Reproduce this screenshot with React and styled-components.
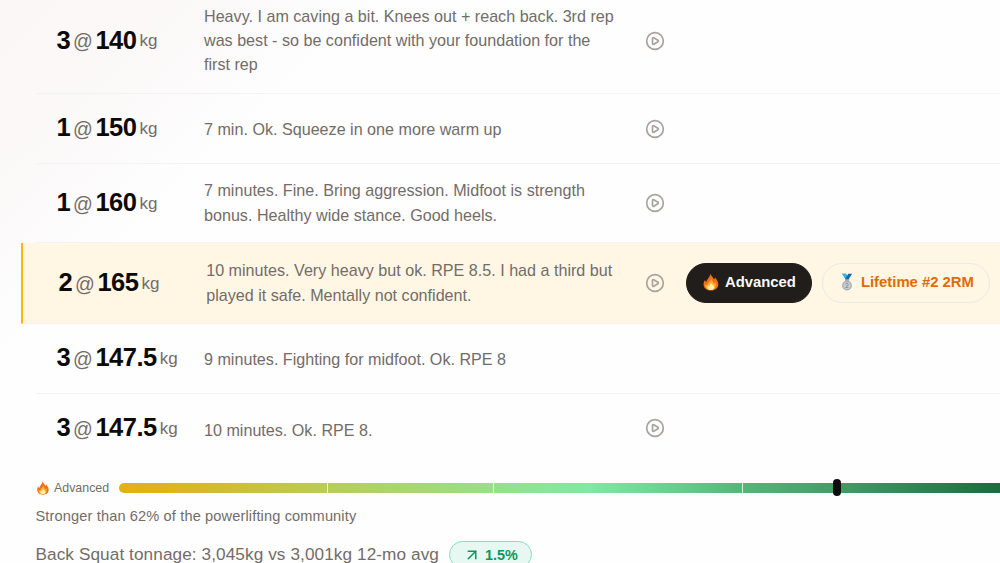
import React from 'react'
import styled, { createGlobalStyle } from 'styled-components'
import { CirclePlay, ArrowUpRight } from 'lucide-react'

const GlobalStyle = createGlobalStyle`
    * {
        box-sizing: border-box;
    }

    body {
        margin: 0;
        overflow: hidden;
        background: #fefefe;
        color: #736c68;
        font-family: "Liberation Sans", Arial, sans-serif;
    }
`;

export const Page = styled.main`
    width: 1000px;
    height: 563px;
    overflow: hidden;
    background: linear-gradient(137deg, #fbf7f7 0%, #fbf8f8 12%, #fefefe 24%, #fefefe 100%);
`;

export const SetList = styled.ul`
    list-style: none;
    margin: -12px 0 0;
    padding: 0 0 0 36px;
`;

export const SetRow = styled.li`
    display: grid;
    grid-template-columns: 147.6px 440.8px 41.2px 1fr;
    align-items: center;
    height: ${({ $height }) => $height}px;
    padding-left: 20.4px;
    border-bottom: 1px solid ${({ $last }) => ($last ? 'transparent' : '#f4f3f3')};
`;

export const BestRow = styled(SetRow)`
    grid-template-columns: 147.8px 438.6px 41.2px 1fr;
    margin-left: -15px;
    padding-left: 35.4px;
    border-left: 2px solid #fbb50b;
    border-bottom-color: #f6f2ea;
    background: #fff7e4;
`;

export const Lift = styled.div`
    display: flex;
    align-items: center;
    padding-bottom: ${({ $lift }) => $lift || 2}px;
    line-height: 30px;
    white-space: nowrap;
`;

export const Count = styled.span`
    color: #0c0a09;
    font-size: 25.5px;
    font-weight: bold;
    letter-spacing: -0.02em;
`;

export const At = styled.span`
    margin: 0 2.5px 0 3px;
    padding-top: 3px;
    font-size: 19.5px;
`;

export const Unit = styled.span`
    margin-left: 3px;
    padding-top: 3px;
    font-size: 17px;
`;

export const Note = styled.p`
    margin: 0;
    width: 414px;
    padding-top: ${({ $drop }) => $drop || 0}px;
    padding-bottom: ${({ $drop }) => ($drop ? 0 : 1)}px;
    font-size: 16.14px;
    line-height: 24.2px;
`;

export const PlayIcon = styled(CirclePlay)`
    display: block;
    color: #a8a29e;
`;

export const Badges = styled.div`
    display: flex;
    gap: 10px;
`;

export const Badge = styled.span`
    display: flex;
    align-items: center;
    gap: 5px;
    height: 40px;
    padding: 0 15px 2px;
    border: 1px solid ${({ $dark }) => ($dark ? '#211d1b' : '#ebe9e6')};
    border-radius: 20px;
    background: ${({ $dark }) => ($dark ? '#211d1b' : 'transparent')};
    color: ${({ $dark }) => ($dark ? '#fafaf9' : '#e26a06')};
    font-size: 14.85px;
    font-weight: bold;
    white-space: nowrap;
`;

export const Strength = styled.section`
    display: flex;
    align-items: center;
    height: 20px;
    margin: 15px 0 0 36px;
`;

export const Level = styled.span`
    display: flex;
    flex: none;
    align-items: center;
    gap: 4px;
    width: 83px;
    padding-bottom: 1px;
    font-size: 12.4px;
`;

export const Track = styled.div`
    position: relative;
    flex: none;
    width: 1040px;
    height: 10px;
    border-radius: 5px;
    background: linear-gradient(
        90deg,
        #e3b017 0%,
        #e0b21c 4%,
        #b8cd55 20%,
        #96e08a 36%,
        #80e8a1 45%,
        #6dd794 51%,
        #56b57a 60%,
        #449c67 69%,
        #1b6b3c 85%,
        #166534 100%
    );
`;

export const Tick = styled.span`
    position: absolute;
    top: 0;
    bottom: 0;
    left: ${({ $at }) => $at}px;
    width: 1px;
    background: rgba(255, 255, 255, 0.8);
`;

export const Marker = styled.span`
    position: absolute;
    top: -4px;
    left: 714px;
    width: 8px;
    height: 17px;
    border-radius: 4px;
    background: #0f0d0c;
`;

export const Percentile = styled.p`
    margin: 9px 0 0 35.5px;
    font-size: 14.6px;
    line-height: 18px;
    letter-spacing: 0.13px;
`;

export const Tonnage = styled.div`
    display: flex;
    align-items: center;
    gap: 10px;
    margin: 16px 0 0 35.5px;
    font-size: 17.2px;
    letter-spacing: 0.085px;
`;

export const Trend = styled.span`
    display: flex;
    align-items: center;
    gap: 4px;
    height: 27px;
    padding: 0 13px;
    border: 1px solid #8bdcbf;
    border-radius: 14px;
    background: #e7f8f3;
    color: #0b985f;
    font-size: 14.4px;
    font-weight: bold;
    letter-spacing: 0;
`;

const Flame = ({ size }) => (
    <svg width={size} height={size} viewBox="0 0 18 18">
        <path d="M8.300.4c.3 2 2.900 3.400 3.700 6 .7-.5 1-1.300.9-2.200 2.300 2.600 3.400 5 3.400 7.400 0 3.600-3.100 6-7.200 6S1.900 15.300 1.600 12c-.2-2 .4-3.500 1.500-4.900.1 1 .5 1.700 1.200 2C4.900 5.800 8.200 4.200 8.300.4z" fill="#ee7118" />
        <path d="M9.300 5.800c.2 2 2.300 2.900 2.600 5 .8-.3 1.300-.9 1.500-1.700 1.400 3.800-.2 7.700-4.300 7.900-4.300.1-6.600-3-5.700-6.100.4.900 1 1.300 1.700 1.400C5.700 9.400 8.800 8.800 9.300 5.800z" fill="#fdae32" />
        <path d="M9 9.800c.3 1.800 3.300 2.500 3.300 4.700 0 1.600-1.400 2.500-3.300 2.500s-3.500-.9-3.500-2.500c0-.9.4-1.600 1-2.100.2.600.5.8.9.900C7.300 11.900 8.700 11.200 9 9.800z" fill="#ffedaa" />
    </svg>
)

const SilverMedal = () => (
    <svg width="18" height="18" viewBox="0 0 18 18">
        <path d="M4 .8h4l3.300 6H8z" fill="#1f9bd7" />
        <path d="M14.200.8h-4L6.900 6.800h3.400z" fill="#1769ad" />
        <path d="M4 .8h4l1.200 2-2 2z" fill="#35b7ea" />
        <path d="M7 6.400h4.200v1.800H7z" fill="#aeb5b9" />
        <circle cx="9" cy="12.500" r="4.900" fill="#a7adb1" />
        <circle cx="9" cy="12.500" r="3.700" fill="#c6cacc" />
        <path d="M7.700 11.400c.2-1.600 2.700-1.400 2.500.1-.1 1-1.500 1.700-2.500 2.900h2.700" fill="none" stroke="#858b8f" strokeWidth="0.900" />
    </svg>
)

const sets = [
    { reps: 3, weight: '140', height: 106, video: true, note: 'Heavy. I am caving a bit. Knees out + reach back. 3rd rep was best - so be confident with your foundation for the first rep' },
    { reps: 1, weight: '150', height: 70, video: true, lift: 3, drop: 2, note: '7 min. Ok. Squeeze in one more warm up' },
    { reps: 1, weight: '160', height: 79, video: true, note: '7 minutes. Fine. Bring aggression. Midfoot is strength bonus. Healthy wide stance. Good heels.' },
    { reps: 2, weight: '165', height: 81, video: true, best: true, note: '10 minutes. Very heavy but ok. RPE 8.5. I had a third but played it safe. Mentally not confident.' },
    { reps: 3, weight: '147.5', height: 70, lift: 3, drop: 2, note: '9 minutes. Fighting for midfoot. Ok. RPE 8' },
    { reps: 3, weight: '147.5', height: 69, video: true, drop: 4, note: '10 minutes. Ok. RPE 8.' },
]

const LiftSet = ({ item, last }) => {
    const Row = item.best ? BestRow : SetRow
    return (
        <Row $height={item.height} $last={last}>
            <Lift $lift={item.lift}>
                <Count>{item.reps}</Count>
                <At>@</At>
                <Count>{item.weight}</Count>
                <Unit>kg</Unit>
            </Lift>
            <Note $drop={item.drop}>{item.note}</Note>
            <span>{item.video && <PlayIcon size={20} />}</span>
            {item.best && (
                <Badges>
                    <Badge $dark><Flame size={18} />Advanced</Badge>
                    <Badge><SilverMedal />Lifetime #2 2RM</Badge>
                </Badges>
            )}
        </Row>
    )
}

const App = () => {
    return (
        <Page>
            <GlobalStyle />
            <SetList>
                {sets.map((item, index) => (
                    <LiftSet item={item} key={index} last={index === sets.length - 1} />
                ))}
            </SetList>
            <Strength>
                <Level><Flame size={14} />Advanced</Level>
                <Track>
                    <Tick $at={208} />
                    <Tick $at={374} />
                    <Tick $at={623} />
                    <Marker />
                </Track>
            </Strength>
            <Percentile>Stronger than 62% of the powerlifting community</Percentile>
            <Tonnage>
                Back Squat tonnage: 3,045kg vs 3,001kg 12-mo avg
                <Trend><ArrowUpRight size={18} />1.5%</Trend>
            </Tonnage>
        </Page>
    )
}

export default App
